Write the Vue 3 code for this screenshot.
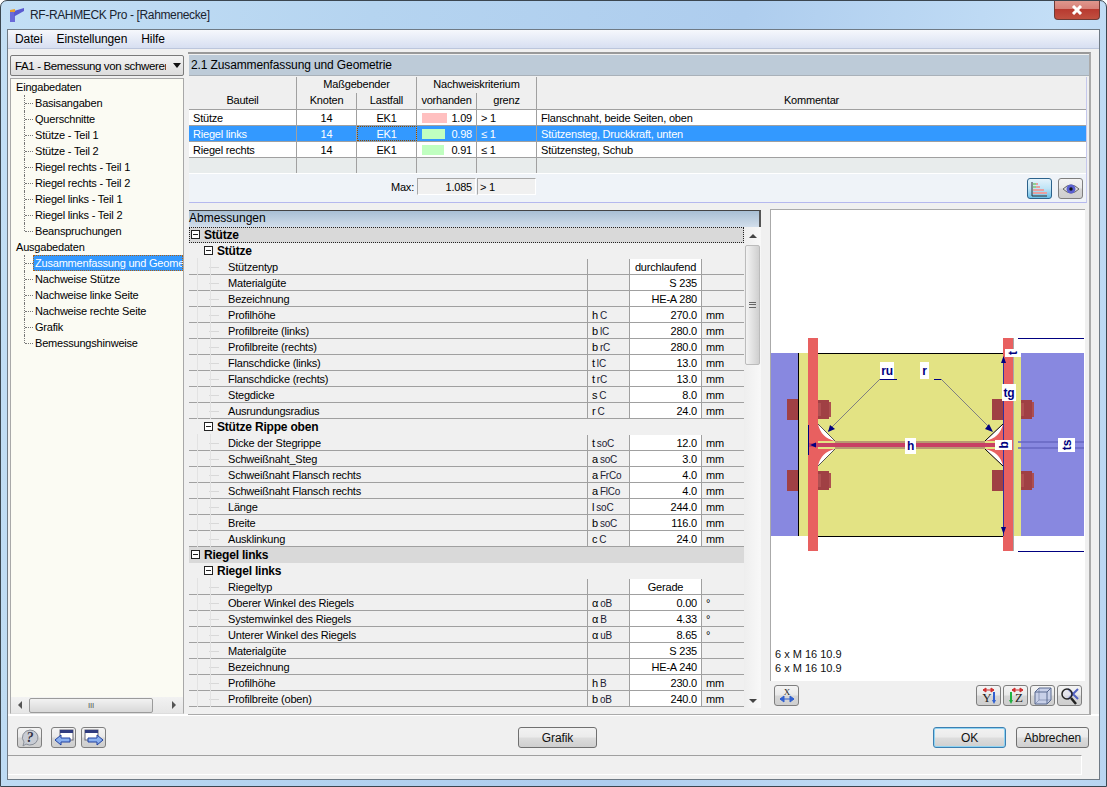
<script setup>
const treeIn = ['Basisangaben','Querschnitte','Stütze - Teil 1','Stütze - Teil 2','Riegel rechts - Teil 1','Riegel rechts - Teil 2','Riegel links - Teil 1','Riegel links - Teil 2','Beanspruchungen']
const treeOut = ['Zusammenfassung und Geometrie','Nachweise Stütze','Nachweise linke Seite','Nachweise rechte Seite','Grafik','Bemessungshinweise']
const results = [
  { name:'Stütze', knoten:'14', lf:'EK1', bar:25, color:'#ffc0c0', val:'1.09', grenz:'> 1', note:'Flanschnaht, beide Seiten, oben' },
  { name:'Riegel links', knoten:'14', lf:'EK1', bar:23, color:'#c0ffc0', val:'0.98', grenz:'≤ 1', note:'Stützensteg, Druckkraft, unten', sel:true },
  { name:'Riegel rechts', knoten:'14', lf:'EK1', bar:22, color:'#c0ffc0', val:'0.91', grenz:'≤ 1', note:'Stützensteg, Schub' },
]
const rows = [
  {g:1,t:'Stütze',focus:true},{g:2,t:'Stütze'},
  {t:'Stützentyp',v:'durchlaufend',c:true},{t:'Materialgüte',v:'S 235'},{t:'Bezeichnung',v:'HE-A 280'},
  {t:'Profilhöhe',s:'h',b:'C',v:'270.0',u:'mm'},{t:'Profilbreite (links)',s:'b',b:'lC',v:'280.0',u:'mm'},
  {t:'Profilbreite (rechts)',s:'b',b:'rC',v:'280.0',u:'mm'},{t:'Flanschdicke (links)',s:'t',b:'lC',v:'13.0',u:'mm'},
  {t:'Flanschdicke (rechts)',s:'t',b:'rC',v:'13.0',u:'mm'},{t:'Stegdicke',s:'s',b:'C',v:'8.0',u:'mm'},
  {t:'Ausrundungsradius',s:'r',b:'C',v:'24.0',u:'mm'},
  {g:2,t:'Stütze Rippe oben'},
  {t:'Dicke der Stegrippe',s:'t',b:'soC',v:'12.0',u:'mm'},{t:'Schweißnaht_Steg',s:'a',b:'soC',v:'3.0',u:'mm'},
  {t:'Schweißnaht Flansch rechts',s:'a',b:'FrCo',v:'4.0',u:'mm'},{t:'Schweißnaht Flansch rechts',s:'a',b:'FlCo',v:'4.0',u:'mm'},
  {t:'Länge',s:'l',b:'soC',v:'244.0',u:'mm'},{t:'Breite',s:'b',b:'soC',v:'116.0',u:'mm'},{t:'Ausklinkung',s:'c',b:'C',v:'24.0',u:'mm'},
  {g:1,t:'Riegel links'},{g:2,t:'Riegel links'},
  {t:'Riegeltyp',v:'Gerade',c:true},{t:'Oberer Winkel des Riegels',s:'α',b:'oB',v:'0.00',u:'°'},
  {t:'Systemwinkel des Riegels',s:'α',b:'B',v:'4.33',u:'°'},{t:'Unterer Winkel des Riegels',s:'α',b:'uB',v:'8.65',u:'°'},
  {t:'Materialgüte',v:'S 235'},{t:'Bezeichnung',v:'HE-A 240'},
  {t:'Profilhöhe',s:'h',b:'B',v:'230.0',u:'mm'},{t:'Profilbreite (oben)',s:'b',b:'oB',v:'240.0',u:'mm'},
]
const bolts = [399,470]
</script>

<template>
  <div class="window">
    <header class="title">
      <svg class="logo" width="16" height="16" viewBox="0 0 16 16"><path d="M1 4h5v11H1z" fill="#6a6ad8"/><path d="M5 4l10-3v3L6 9H5z" fill="#5a5ad0"/><path d="M1 3l5-1v3H1z" fill="#e8a030"/></svg>
      <span>RF-RAHMECK Pro - [Rahmenecke]</span>
      <div class="close"><svg width="14" height="10" viewBox="0 0 14 10"><path d="M3 1l8 8M11 1l-8 8" stroke="#fff" stroke-width="3"/></svg></div>
    </header>

    <div class="client">
      <nav class="menu"><span>Datei</span><span>Einstellungen</span><span>Hilfe</span></nav>

      <main class="main">
        <aside class="side">
          <div class="combo"><span>FA1 - Bemessung von schwerer</span><i class="caret"></i></div>
          <div class="tree">
            <div class="tree-scroll">
              <div class="root">Eingabedaten</div>
              <ul><li v-for="t in treeIn" :key="t"><span>{{ t }}</span></li></ul>
              <div class="root">Ausgabedaten</div>
              <ul><li v-for="(t,i) in treeOut" :key="t"><span :class="{ on: i===0 }">{{ t }}</span></li></ul>
            </div>
            <div class="hbar"><i class="tri-l"></i><div class="hthumb">III</div><i class="tri-r"></i></div>
          </div>
        </aside>

        <section class="panel">
          <h2 class="panel-head">2.1 Zusammenfassung und Geometrie</h2>
          <div class="results">
            <div class="rhead">
              <div class="h-bauteil">Bauteil</div>
              <div class="h-mass">Maßgebender</div>
              <div class="h-nach">Nachweiskriterium</div>
              <div class="h-komm">Kommentar</div>
              <div class="h-sub">Knoten</div><div class="h-sub">Lastfall</div>
              <div class="h-sub">vorhanden</div><div class="h-sub">grenz</div>
            </div>
            <div v-for="r in results" :key="r.name" class="rrow" :class="{ sel: r.sel }">
              <div class="c-name">{{ r.name }}</div>
              <div class="c-mid">{{ r.knoten }}</div>
              <div class="c-mid" :class="{ focus: r.sel }">{{ r.lf }}</div>
              <div class="c-val"><i class="bar" :style="{ width: r.bar+'px', background: r.color }"></i>{{ r.val }}</div>
              <div class="c-gr">{{ r.grenz }}</div>
              <div class="c-note">{{ r.note }}</div>
            </div>
            <div class="rrow empty"><div></div><div></div><div></div><div></div><div></div><div></div></div>
            <div class="maxrow">
              <label>Max:</label><div class="box num">1.085</div><div class="box">&gt; 1</div>
              <div class="tools">
                <button class="ib active"><svg width="18" height="16" viewBox="0 0 18 16"><path d="M1 1v14h15" fill="none" stroke="#333"/><path d="M2 3h5M2 6h7M2 9h11M2 12h14" stroke="#e8a0a0" stroke-width="2"/><path d="M2 3h3M2 6h3" stroke="#90d090" stroke-width="2"/></svg></button>
                <button class="ib"><svg width="18" height="14" viewBox="0 0 18 14"><path d="M1 7q8-8 16 0q-8 8-16 0z" fill="#ddd" stroke="#666"/><circle cx="9" cy="7" r="4.500" fill="#5a60d0"/><circle cx="9" cy="7" r="1.700" fill="#111"/></svg></button>
              </div>
            </div>
          </div>

          <div class="lower">
            <div class="dims">
              <div class="dims-head">Abmessungen</div>
              <div class="dims-body">
                <div class="dims-rows">
                  <template v-for="(r,i) in rows" :key="i">
                    <div v-if="r.g" class="grp" :class="['g'+r.g, { focus: r.focus }]">
                      <i class="minus"></i><b>{{ r.t }}</b>
                    </div>
                    <div v-else class="drow">
                      <div class="d-label">{{ r.t }}</div>
                      <div class="d-sym">{{ r.s }}<small v-if="r.b">{{ r.b }}</small></div>
                      <div class="d-val" :class="{ ctr: r.c }">{{ r.v }}</div>
                      <div class="d-unit">{{ r.u }}</div>
                    </div>
                  </template>
                  <div class="stub"></div>
                </div>
                <div class="vbar">
                  <i class="tri-u"></i>
                  <div class="vthumb"><span></span></div>
                  <i class="tri-d"></i>
                </div>
              </div>
            </div>

            <div class="graphic">
              <div class="canvas">
                <svg class="drawing" width="313" height="471" viewBox="771 210 313 471">
                  <rect x="771" y="353" width="27" height="183" fill="#8888e0"/>
                  <rect x="1021" y="353" width="63" height="183" fill="#8888e0"/>
                  <rect x="798" y="353" width="223" height="183" fill="#e3e384"/>
                  <path d="M798.500 353v183" stroke="#000"/>
                  <path d="M815 353.500h188M815 536.500h188" stroke="#000"/>
                  <g v-for="y in bolts" :key="y">
                    <rect x="787" :y="y" width="11" height="21" fill="#a04044"/>
                    <rect x="818" :y="y+1" width="11" height="19" fill="#a04044"/>
                    <rect x="829" :y="y+3" width="2" height="15" fill="#ad4f50"/>
                    <rect x="818" :y="y+4" width="3" height="13" fill="#b05052"/>
                    <rect x="992" :y="y" width="11" height="21" fill="#a04044"/>
                    <rect x="1021" :y="y+1" width="11" height="19" fill="#a04044"/>
                    <rect x="1032" :y="y+3" width="2" height="15" fill="#ad4f50"/>
                    <rect x="1021" :y="y+4" width="3" height="13" fill="#b05052"/>
                  </g>
                  <rect x="808" y="338" width="10" height="213" fill="#e86060"/>
                  <rect x="1003" y="338" width="10" height="213" fill="#e86060"/>
                  <path d="M1013.500 338v213" stroke="#a8a8a8"/>
                  <path d="M818 424l17 17h-17zM818 466l17-17h-17z" fill="#e86060"/>
                  <path d="M1003 424l-18 17h18zM1003 466l-18-17h18z" fill="#e86060"/>
                  <path d="M818 424l17 17q-14-3-17-17zM818 466l17-17q-14 3-17 17z" fill="#fff"/>
                  <path d="M1003 424l-18 17q15-3 18-17zM1003 466l-18-17q15 3 18 17z" fill="#fff"/>
                  <path d="M818 424l17 17M818 466l17-17" stroke="#555"/>
                  <path d="M985 441l18-17M985 449l18 17" stroke="#000"/>
                  <rect x="835" y="441" width="150" height="8" fill="#b89a72"/>
                  <rect x="808" y="443" width="195" height="4" fill="#c84064"/>
                  <path d="M1003.500 358v178" stroke="#3030a0"/>
                  <path d="M808.500 425v30" stroke="#000080"/>
                  <path d="M880 379l-52 52" stroke="#808080"/><path d="M880 379.500h17" stroke="#000080"/>
                  <path d="M934 379.500h7" stroke="#000080"/><path d="M941 379l50 50" stroke="#808080"/>
                  <path d="M828 432l2-7 5 4zM993 432l-8-3 4-5z" fill="#000080"/>
                  <path d="M1003.500 356l2.500 7h-5zM1003.500 534l-2.500-7h5zM810 445l6-2.500v5z" fill="#000080"/>
                  <path d="M1018 338.500h66M1018 551.500h66" stroke="#000080"/>
                  <path d="M1018 442h70M1018 448h70" stroke="#6a6ac4" stroke-width="2" opacity=".8"/>
                  <g class="tag">
                    <rect x="880" y="362" width="14" height="17"/><text x="887" y="375">ru</text>
                    <rect x="920" y="362" width="9" height="17"/><text x="924.500" y="375">r</text>
                    <rect x="1002" y="384" width="14" height="17"/><text x="1009" y="397">tg</text>
                    <rect x="905" y="438" width="11" height="16"/><text x="910.500" y="450">h</text>
                    <rect x="995" y="440" width="17" height="10"/><text transform="translate(1008 445) rotate(-90)">b</text>
                    <rect x="1005" y="349" width="16" height="8"/><text transform="translate(1017 353) rotate(-90)">t</text>
                    <rect x="1058" y="438" width="17" height="14"/><text transform="translate(1071 445) rotate(-90)">ts</text>
                  </g>
                  <text class="cap" x="775" y="658">6 x M 16 10.9</text>
                  <text class="cap" x="775" y="672">6 x M 16 10.9</text>
                </svg>
              </div>
              <div class="gtools">
                <button class="ib"><svg width="18" height="17" viewBox="0 0 18 17"><text x="9" y="8" class="axis">X</text><path d="M2 12h14M2 12l4-3v6zM16 12l-4-3v6z" fill="#3060d0" stroke="#3060d0"/></svg></button>
                <span class="grow"></span>
                <button class="ib"><svg width="18" height="18" viewBox="0 0 18 18"><path d="M3 3h11M3 3l3-2v4zM14 3l-3-2v4z" stroke="#d03030" fill="#d03030"/><path d="M14 5v10" stroke="#3060d0" stroke-width="2"/><path d="M12 13h4l-2 4z" fill="#3060d0"/><text x="7" y="15" class="axis big">Y</text></svg></button>
                <button class="ib"><svg width="18" height="18" viewBox="0 0 18 18"><path d="M5 3h11M5 3l3-2v4zM16 3l-3-2v4z" stroke="#d03030" fill="#d03030"/><path d="M4 5v10" stroke="#20b040" stroke-width="2"/><path d="M2 13h4l-2 4z" fill="#20b040"/><text x="12" y="15" class="axis big">Z</text></svg></button>
                <button class="ib"><svg width="18" height="18" viewBox="0 0 18 18" fill="#c8d0e8" stroke="#5a6a90"><path d="M5 1h12v12l-4 4H1V5z"/><path d="M1 5h12v12M13 5l4-4" fill="none"/><path d="M5 1v12h12M5 13l-4 4" fill="none" opacity=".5"/></svg></button>
                <button class="ib"><svg width="20" height="18" viewBox="0 0 20 18"><path d="M8 2l10 10M18 2L8 12" stroke="#5060c0" stroke-width="2"/><circle cx="7" cy="7" r="5" fill="#dde" fill-opacity=".5" stroke="#222" stroke-width="1.500"/><path d="M11 11l5 6" stroke="#222" stroke-width="2.500"/></svg></button>
              </div>
            </div>
          </div>
        </section>
      </main>

      <footer class="foot">
        <div class="foot-l">
          <button class="ib"><svg width="18" height="18" viewBox="0 0 18 18"><path d="M9 1a8 7.500 0 1 1-4 14l-3 2 1-4A8 7.500 0 0 1 9 1z" fill="#c8ccd4" stroke="#8a8f98"/><text x="9" y="13" class="q">?</text></svg></button>
          <button class="ib first"><svg width="20" height="18" viewBox="0 0 20 18"><rect x="6" y="1" width="13" height="10" fill="#fff" stroke="#667"/><rect x="6" y="1" width="13" height="3" fill="#303c80"/><path d="M1 11l6-5v3h9v4H7v3z" fill="#8ab0f0" stroke="#2040a0"/></svg></button>
          <button class="ib"><svg width="20" height="18" viewBox="0 0 20 18"><rect x="1" y="1" width="13" height="10" fill="#fff" stroke="#667"/><rect x="1" y="1" width="13" height="3" fill="#303c80"/><path d="M19 11l-6-5v3H4v4h9v3z" fill="#8ab0f0" stroke="#2040a0"/></svg></button>
        </div>
        <button class="btn grafik">Grafik</button>
        <div class="foot-r">
          <button class="btn ok">OK</button>
          <button class="btn">Abbrechen</button>
        </div>
      </footer>
      <div class="status"></div>
    </div>
  </div>
</template>

<style>
html, body { margin: 0; padding: 0; overflow: hidden; }
</style>

<style scoped>
* { box-sizing: border-box; }
.window {
  width: 1107px; height: 787px; padding: 0 6px 6px; overflow: hidden;
  font: 11px/16px "Liberation Sans", Arial, sans-serif; letter-spacing: -.2px; color: #000;
  background: linear-gradient(100deg, #c3dff5 0%, #b5d4f0 30%, #aecdee 60%, #c3def6 85%, #b9d5f1 100%);
  border: 1px solid #3b4650; border-radius: 7px 7px 0 0;
}
.title { height: 28px; display: flex; align-items: center; position: relative; font-size: 12px; letter-spacing: -.36px; color: #1a2430; }
.logo { margin: 0 5px 0 2px; }
.close {
  position: absolute; right: 0; top: -1px; width: 46px; height: 20px;
  background: linear-gradient(#e09a90 0%, #d67f76 48%, #b83a30 50%, #c05040 100%);
  border: 1px solid #6d3b36; border-top: 0; border-radius: 0 0 4px 4px;
  display: flex; align-items: center; justify-content: center;
}
.client { height: 751px; background: #f0f0f0; border: 1px solid #6f7a85; display: flex; flex-direction: column; }
.menu { height: 19px; flex: none; display: flex; gap: 14px; padding: 1px 0 0 7px; font-size: 12px; letter-spacing: -.1px; background: linear-gradient(#f6f8fc, #d7dff1); border-bottom: 1px solid #bcc6dc; }
.main { height: 667px; flex: none; display: flex; border-bottom: 2px solid #fff; }
.side { width: 178px; padding: 6px 0 0 2px; flex: none; }
.combo {
  width: 174px; height: 21px; display: flex; align-items: center; padding-left: 4px; font-size: 11.500px; letter-spacing: -.36px; white-space: nowrap; overflow: hidden;
  background: linear-gradient(#f4f4f4, #dcdcdc); border: 1px solid #7a7a7a; border-radius: 2px; position: relative;
}
.combo span { width: 151px; overflow: hidden; flex: none; }
.caret { margin-left: 7px; border: 4px solid transparent; border-top: 5px solid #111; border-bottom: 0; }
.tree { width: 174px; height: 636px; margin-top: 2px; border: 1px solid #a8a8a8; border-bottom-color: #ddd; background: #fbfbf3; display: flex; flex-direction: column; }
.tree-scroll { flex: 1; overflow: hidden; padding-left: 5px; white-space: nowrap; }
.root { height: 16px; }
ul { list-style: none; margin: 0; padding: 0 0 0 8px; }
li { height: 16px; position: relative; padding-left: 11px; }
li::before { content: ""; position: absolute; left: 0; top: 0; height: 16px; border-left: 1px dotted #777; }
li:last-child::before { height: 8px; }
li::after { content: ""; position: absolute; left: 1px; top: 8px; width: 8px; border-top: 1px dotted #777; }
.tree li span { display: block; overflow: hidden; margin-left: -2px; padding-left: 2px; }
.tree li span.on { background: #3399ff; color: #fff; outline: 1px dotted #b06010; outline-offset: -1px; width: 150px; }
.hbar { height: 16px; background: linear-gradient(#f2f2f2, #e6e6e6); display: flex; align-items: center; padding: 0 0 0 7px; }
.hthumb { margin-left: 7px; width: 124px; height: 15px; background: linear-gradient(#f2f2f2, #d8d8d8); border: 1px solid #9b9b9b; border-radius: 2px; font-size: 8px; line-height: 13px; text-align: center; color: #555; }
.hbar .tri-r { margin-left: 19px; }
.tri-l, .tri-r, .tri-u, .tri-d { display: block; width: 0; height: 0; border: 4px solid transparent; }
.tri-l { border-right: 4px solid #555; border-left: 0; }
.tri-r { border-left: 4px solid #555; border-right: 0; }
.tri-u { border-bottom: 4px solid #444; border-top: 0; }
.tri-d { border-top: 4px solid #444; border-bottom: 0; }

.panel { width: 903px; height: 663px; margin-top: 3px; margin-left: 2px; border-top: 2px solid #999; border-right: 2px solid #aaa; border-bottom: 1px solid #aaa; padding-top: 1px; }
.panel-head { margin: 0 0 1px 1px; height: 21px; background: #bdcbd8; font: 12px/21px "Liberation Sans", Arial, sans-serif; letter-spacing: -.12px; padding-left: 2px; border-bottom: 1px solid #a9b1b9; }
.results { margin-left: 1px; width: 898px; border-right: 1px solid #c5c8ec; border-bottom: 1px solid #b5b8ee; background: #eff3f8; }
.rhead { display: grid; grid-template-columns: 108px 60px 60px 60px 60px 1fr; grid-template-rows: 16px 16px; background: #efefef; border-bottom: 1px solid #a0a0a0; text-align: center; line-height: 14px; }
.rhead > div { border-right: 1px solid #a0a0a0; white-space: nowrap; }
.h-bauteil { grid-column: 1; grid-row: 1 / 3; padding-top: 16px; }
.h-mass { grid-column: 2 / 4; grid-row: 1; border-right: 1px solid #a0a0a0; }
.h-nach { grid-column: 4 / 6; grid-row: 1; }
.h-komm { grid-column: 6; grid-row: 1 / 3; padding-top: 16px; border-right: 0 !important; }
.h-sub { grid-row: 2; }
.rrow { display: grid; grid-template-columns: 108px 60px 60px 60px 60px 1fr; height: 16px; background: #fff; border-bottom: 1px solid #a0a0a0; line-height: 16px; }
.rrow > div { border-right: 1px solid #a0a0a0; white-space: nowrap; height: 15px; }
.rrow > div:last-child { border-right: 0; }
.rrow.sel { background: #3399ff; color: #fff; }
.rrow.empty { background: #e8ecec; border-bottom: 1px solid #fff; }
.c-name, .c-note { padding-left: 4px; }
.c-mid { text-align: center; }
.focus { outline: 1px dotted #8a4a00; outline-offset: -1px; }
.c-val { text-align: right; padding-right: 4px; position: relative; }
.bar { position: absolute; left: 5px; top: 3px; height: 10px; }
.c-gr { padding-left: 4px; }
.maxrow { height: 28px; display: flex; align-items: flex-start; padding-top: 4px; }
.maxrow label { width: 228px; text-align: right; padding-right: 3px; line-height: 18px; }
.box { width: 59px; height: 17px; line-height: 16px; background: #f0f0f0; border: 1px solid #fff; border-top-color: #a8a8a8; border-left-color: #a8a8a8; padding: 0 2px; margin-right: 1px; }
.num { text-align: right; padding-right: 3px; }
.tools { margin-left: auto; display: flex; gap: 6px; padding-right: 3px; }
.ib {
  width: 25px; height: 21px; padding: 0; display: flex; align-items: center; justify-content: center;
  border: 1px solid #7f7f7f; border-radius: 3px; background: linear-gradient(#f4f4f4 0%, #e9e9e9 48%, #d6d6d6 52%, #cfcfcf 100%);
}
.ib.active { background: linear-gradient(#e4f3fb 0%, #bfe4f6 50%, #6cc0e8 100%); border-color: #2c628b; }

.lower { display: flex; margin-top: 6px; margin-left: 1px; }
.dims { width: 572px; flex: none; margin-top: 1px; }
.dims-head { height: 17px; font-size: 12px; letter-spacing: 0; background: linear-gradient(#a8bfd4, #d2deeb); border-top: 1px solid #444; border-right: 2px solid #555; line-height: 15px; }
.dims-body { display: flex; height: 481px; }
.dims-rows { width: 555px; overflow: hidden; background: #f0f0f0; }
.grp { height: 16px; display: flex; align-items: center; padding-bottom: 1px; }
.grp b { font-size: 12px; letter-spacing: -.2px; }
.grp.g1 { padding-left: 2px; background: #d9d9d9; }
.grp.g2 { padding-left: 15px; background: #f0f0f0; }
.grp.focus { outline: 1px dotted #222; outline-offset: -1px; }
.minus { width: 9px; height: 9px; border: 1px solid #222; background: #fff; position: relative; margin-right: 4px; flex: none; }
.minus::after { content: ""; position: absolute; left: 1px; right: 1px; top: 3px; border-top: 1px solid #222; }
.drow { display: grid; grid-template-columns: 399px 42px 72px 1fr; height: 16px; border-bottom: 1px solid #a0a0a0; line-height: 16px; }
.drow > div { border-right: 1px solid #a0a0a0; white-space: nowrap; height: 15px; }
.drow > div:last-child { border-right: 0; }
.d-label { padding-left: 39px; position: relative; }
.d-label::before { content: ""; position: absolute; left: 20px; width: 10px; top: 8px; border-top: 1px solid #d8d8d8; }
.d-label::after { content: ""; position: absolute; left: 8px; top: -1px; bottom: -1px; width: 12px; border-left: 1px solid #e2e2e2; border-right: 1px solid #e2e2e2; }
.d-sym { padding-left: 4px; }
.d-sym small { font-size: 10px; color: #223; margin-left: 2px; }
.d-val { background: #fff; text-align: right; padding-right: 4px; }
.d-val.ctr { text-align: center; padding-right: 0; }
.d-unit { padding-left: 4px; }
.stub { height: 8px; }
.vbar { width: 17px; background: linear-gradient(90deg, #eeeeee, #f8f8f8); display: flex; flex-direction: column; align-items: center; position: relative; padding-top: 7px; }
.vthumb { width: 15px; height: 120px; margin-top: 7px; background: linear-gradient(90deg, #f3f3f3, #cfcfcf); border: 1px solid #bbb; border-radius: 2px; display: flex; align-items: center; justify-content: center; }
.vthumb span { width: 7px; height: 6px; border-top: 1px solid #666; border-bottom: 1px solid #666; position: relative; }
.vthumb span::after { content: ""; position: absolute; left: 0; right: 0; top: 1px; border-top: 1px solid #666; }
.vbar .tri-d { position: absolute; bottom: 5px; }
.graphic { width: 319px; margin-left: 9px; display: flex; flex-direction: column; flex: none; }
.canvas { height: 472px; background: #fff; border-left: 1px solid #aaa; border-top: 1px solid #aaa; width: 315px; overflow: hidden; }
.drawing { display: block; }
.tag rect { fill: #fff; }
.tag text { font: bold 12px "Liberation Sans", Arial, sans-serif; fill: #000080; text-anchor: middle; }
.cap { font: 11px "Liberation Sans", Arial, sans-serif; letter-spacing: 0; fill: #111; }
.axis { font: 9px "Liberation Serif", serif; text-anchor: middle; fill: #222; }
.axis.big { font-size: 13px; }
.q { font: italic bold 14px "Liberation Serif", serif; text-anchor: middle; fill: #334; }
.gtools { display: flex; gap: 2px; padding: 4px 7px 0 4px; height: 34px; }
.grow { flex: 1; }
.foot { height: 39px; flex: none; display: flex; align-items: flex-start; padding: 11px 10px 0 9px; }
.foot-l { display: flex; gap: 5px; width: 501px; }
.foot-l .first { margin-left: 4px; }
.btn { height: 21px; padding: 0; font: 12px "Liberation Sans", Arial, sans-serif; letter-spacing: -.1px; width: 73px; border: 1px solid #707070; border-radius: 3px; background: linear-gradient(#f2f2f2 0%, #ebebeb 48%, #dddddd 52%, #cfcfcf 100%); color: #111; }
.grafik { width: 79px; }
.foot-r { margin-left: auto; display: flex; gap: 10px; }
.ok { border-color: #3c7fb1; box-shadow: inset 0 0 0 1px #8fd3f2; }
.status { height: 20px; width: 1074px; border-top: 1px solid #a0a0a0; border-right: 1px solid #fff; border-bottom: 1px solid #fff; }
</style>
